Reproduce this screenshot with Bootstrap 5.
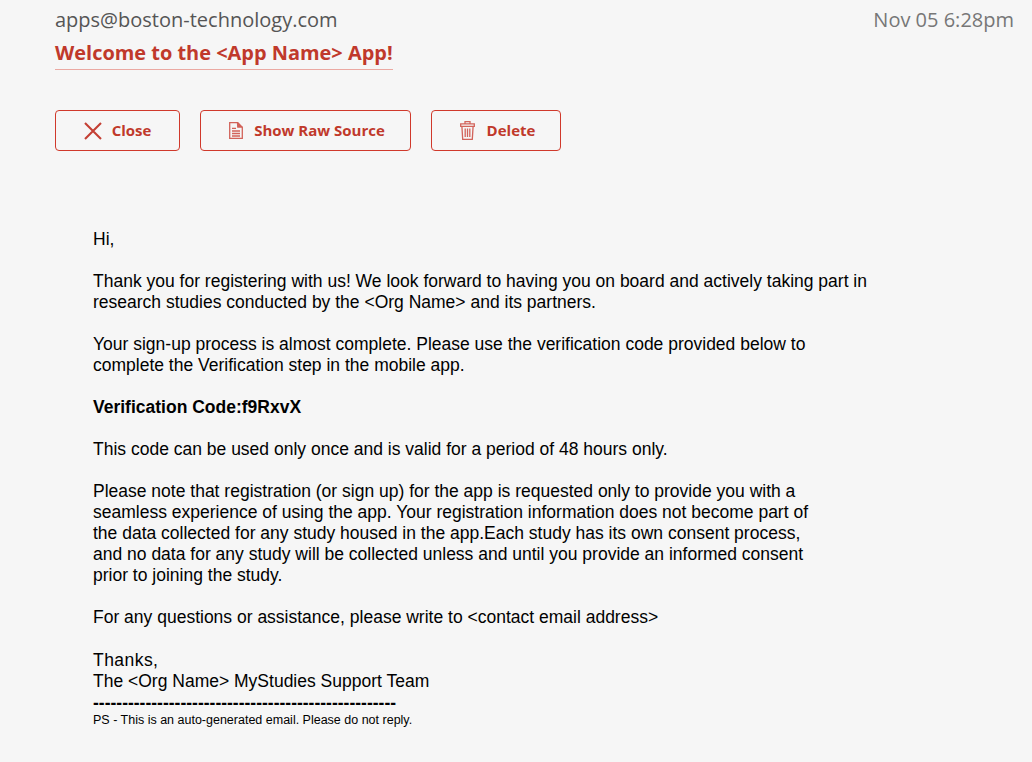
<!DOCTYPE html>
<html lang="en">
<head>
    <meta charset="UTF-8">
    <meta name="viewport" content="width=device-width, initial-scale=1.0">
    <title>Message</title>
    <link href="https://cdn.jsdelivr.net/npm/bootstrap@5.3.0/dist/css/bootstrap.min.css" rel="stylesheet">
    <style>
        body {
            background: #f6f6f6;
            font-family: "Open Sans", sans-serif;
            overflow: hidden;
        }
        .mail-wrap {
            padding: 6px 18px 0 55px;
        }
        .mail-from {
            font-size: 20px;
            line-height: 28px;
            color: #555;
        }
        .mail-date {
            font-size: 20px;
            line-height: 28px;
            color: #777;
        }
        .mail-title {
            font-size: 19.95px;
            font-weight: 700;
            line-height: 28px;
            color: #c0392b;
            border-bottom: 1px solid #eba9a2;
            margin: 5px 0 0;
            padding-bottom: 2px;
        }
        .mail-actions {
            margin-top: 40px;
            gap: 20px;
        }
        .btn-mail {
            height: 41px;
            display: flex;
            align-items: center;
            justify-content: center;
            padding: 0;
            font-size: 15px;
            font-weight: 700;
            color: #c0392b;
            border: 1px solid #d0392b;
            border-radius: 4px;
            background: transparent;
        }
        .btn-mail:hover {
            color: #c0392b;
            border-color: #d0392b;
        }
        .btn-close-mail { width: 125px; gap: 10px; }
        .btn-raw { width: 211px; gap: 11px; padding-left: 3px; }
        .btn-delete { width: 130px; gap: 12px; padding-left: 3px; }
        .mail-body {
            margin-top: 78px;
            padding-left: 38px;
            font-family: "Liberation Sans", Arial, sans-serif;
            font-size: 17.5px;
            line-height: 21px;
            color: #000;
        }
        .mail-body p {
            margin: 0 0 21px;
        }
        .mail-sign {
            padding-top: 1px;
        }
        .mail-thanks {
            letter-spacing: .45px;
        }
        .mail-rule {
            font-weight: 700;
            line-height: 23px;
            height: 21px;
            overflow: hidden;
        }
        .mail-foot {
            font-size: 12.5px;
            line-height: 14px;
        }
    </style>
</head>
<body>
    <div class="mail-wrap">
        <div class="d-flex justify-content-between">
            <div class="mail-from">apps@boston-technology.com</div>
            <div class="mail-date">Nov 05 6:28pm</div>
        </div>
        <div class="d-flex">
            <h1 class="mail-title">Welcome to the &lt;App Name&gt; App!</h1>
        </div>
        <div class="mail-actions d-flex">
            <button type="button" class="btn btn-mail btn-close-mail">
                <svg width="18" height="18" viewBox="0 0 18 18"><path d="M1 1 L17 17 M17 1 L1 17" fill="none" stroke="#c43f34" stroke-width="2.1"/></svg>
                Close
            </button>
            <button type="button" class="btn btn-mail btn-raw">
                <svg width="14" height="17" viewBox="0 0 14 17" fill="none" stroke="#d2635a" stroke-width="1.3"><path d="M.7 .7 H8.8 L13.3 5.2 V16.3 H.7 Z"/><path d="M8.5 .7 L8.8 5 H13.3" fill="#d2635a"/><path d="M3 6.3 H7 M3 9 H11 M3 11.5 H11 M3 14 H11"/></svg>
                Show Raw Source
            </button>
            <button type="button" class="btn btn-mail btn-delete">
                <svg width="15" height="19" viewBox="0 0 15 19" fill="none" stroke="#d2635a" stroke-width="1.3"><path d="M5 2.6 V.7 H10 V2.6 M.7 2.8 H14.3 V5.4 H.7 Z M1.9 5.4 L2.7 18.3 H12.3 L13.1 5.4"/><path d="M5.2 7.5 V16 M7.5 7.5 V16 M9.8 7.5 V16"/></svg>
                Delete
            </button>
        </div>
        <div class="mail-body">
            <p>Hi,</p>
            <p>Thank you for registering with us! We look forward to having you on board and actively taking part in<br>research studies conducted by the &lt;Org Name&gt; and its partners.</p>
            <p>Your sign-up process is almost complete. Please use the verification code provided below to<br>complete the Verification step in the mobile app.</p>
            <p class="fw-bold">Verification Code:f9RxvX</p>
            <p>This code can be used only once and is valid for a period of 48 hours only.</p>
            <p>Please note that registration (or sign up) for the app is requested only to provide you with a<br>seamless experience of using the app. Your registration information does not become part of<br>the data collected for any study housed in the app.Each study has its own consent process,<br>and no data for any study will be collected unless and until you provide an informed consent<br>prior to joining the study.</p>
            <p>For any questions or assistance, please write to &lt;contact email address&gt;</p>
            <div class="mail-sign"><span class="mail-thanks">Thanks,</span><br>The &lt;Org Name&gt; MyStudies Support Team</div>
            <div class="mail-rule">----------------------------------------------------</div>
            <div class="mail-foot">PS - This is an auto-generated email. Please do not reply.</div>
        </div>
    </div>
    <script src="https://cdn.jsdelivr.net/npm/bootstrap@5.3.0/dist/js/bootstrap.bundle.min.js"></script>
</body>
</html>
